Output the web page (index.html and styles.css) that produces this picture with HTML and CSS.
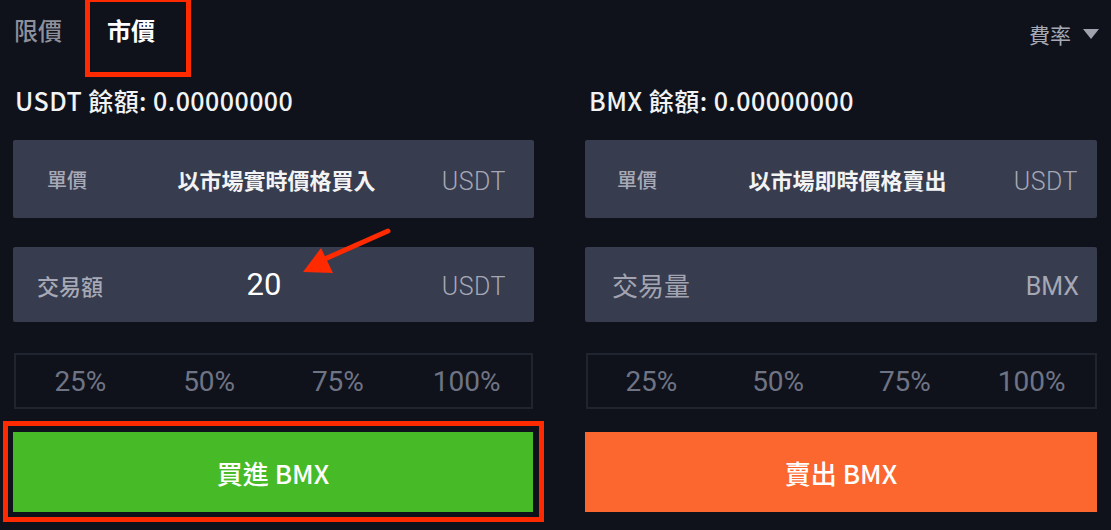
FILE: index.html
```html
<!DOCTYPE html>
<html lang="zh-Hant">
<head>
<meta charset="utf-8">
<title>市價交易</title>
<link rel="stylesheet" href="styles.css">
</head>
<body>
<div class="page">
  <header class="topbar">
    <nav class="tabs">
      <span class="tab">限價</span>
      <span class="tab tab-active">市價</span>
    </nav>
    <div class="fee">費率 <span class="caret"></span></div>
  </header>

  <main class="columns">
    <section class="col col-buy">
      <div class="balance">USDT 餘額: 0.00000000</div>
      <div class="field field-price">
        <span class="label">單價</span>
        <span class="value value-text">以市場實時價格買入</span>
        <span class="unit">USDT</span>
      </div>
      <div class="field field-amount">
        <span class="label label-md">交易額</span>
        <span class="value value-num">20</span>
        <span class="unit">USDT</span>
      </div>
      <div class="percents">
        <span>25%</span><span>50%</span><span>75%</span><span>100%</span>
      </div>
      <div class="btn-wrap highlighted">
        <button class="btn btn-buy">買進 BMX</button>
      </div>
    </section>

    <section class="col col-sell">
      <div class="balance">BMX 餘額: 0.00000000</div>
      <div class="field field-price">
        <span class="label">單價</span>
        <span class="value value-text">以市場即時價格賣出</span>
        <span class="unit">USDT</span>
      </div>
      <div class="field field-amount">
        <span class="label label-lg">交易量</span>
        <span class="value"></span>
        <span class="unit unit-strong">BMX</span>
      </div>
      <div class="percents">
        <span>25%</span><span>50%</span><span>75%</span><span>100%</span>
      </div>
      <div class="btn-wrap">
        <button class="btn btn-sell">賣出 BMX</button>
      </div>
    </section>
  </main>

  <svg class="arrow" width="1111" height="530" viewBox="0 0 1111 530" aria-hidden="true">
    <line x1="388" y1="231" x2="318" y2="262" stroke="#ff2a00" stroke-width="5" stroke-linecap="round"/>
    <polygon points="303,272 321,248 333,273" fill="#ff2a00"/>
  </svg>
</div>
</body>
</html>
```

FILE: styles.css
```css
* { box-sizing: border-box; margin: 0; padding: 0; }

html, body {
  background: #0f121b;
}

body {
  width: 1111px;
  height: 530px;
  overflow: hidden;
  font-family: "Noto Sans CJK TC", "Noto Sans", sans-serif;
  color: #eef0f3;
}

.page {
  position: relative;
  width: 1111px;
  height: 530px;
}

/* ---------- top bar ---------- */
.topbar {
  display: flex;
  align-items: flex-start;
  justify-content: space-between;
  height: 67px;
  padding: 0 12px 0 14px;
}

.tabs {
  display: flex;
  align-items: flex-start;
}

.tab {
  font-size: 24px;
  line-height: 32px;
  padding-top: 14px;
  color: #8d909b;
  font-weight: 500;
}

.tab-active {
  position: relative;
  color: #ffffff;
  margin-left: 45px;
  font-weight: 700;
}

/* annotation box around the active tab */
.tab-active::after {
  content: "";
  position: absolute;
  left: -22px;
  right: -36px;
  top: -3px;
  height: 70px;
  border: 5px solid #ff2a00;
}

.fee {
  display: flex;
  align-items: center;
  gap: 12px;
  padding-top: 20px;
  font-size: 21px;
  line-height: 28px;
  color: #a6a9b3;
}

.caret {
  width: 0;
  height: 0;
  border-left: 8px solid transparent;
  border-right: 8px solid transparent;
  border-top: 10px solid #a0a3ad;
}

/* ---------- columns ---------- */
.columns {
  display: grid;
  grid-template-columns: 521px 512px;
  column-gap: 51px;
  padding-left: 13px;
}

.col {
  display: flex;
  flex-direction: column;
}

.balance {
  margin-top: 18px;
  height: 30px;
  line-height: 30px;
  font-size: 25px;
  font-weight: 500;
  letter-spacing: 0.45px;
  color: #f2f3f5;
  padding-left: 2px;
}

.col-sell .balance { padding-left: 4px; }

.field {
  display: grid;
  grid-template-columns: 1fr auto 1fr;
  align-items: center;
  background: #373c4f;
  border-radius: 2px;
}

.field-price {
  margin-top: 25px;
  height: 78px;
}

.field-amount {
  margin-top: 29px;
  height: 75px;
}

.col-buy .field-price { padding: 0 28px 0 34px; }
.col-buy .field-amount { padding: 0 28px 0 24px; }
.col-sell .field-price { padding: 0 19px 0 32px; }
.col-sell .field-amount { padding: 0 18px 0 27px; }

.label {
  justify-self: start;
  font-size: 20px;
  font-weight: 500;
  color: #a7aab6;
}

.label-md { font-size: 22px; }
.label-lg { font-size: 26px; font-weight: 400; color: #a2a5b1; }

.value-text {
  font-size: 22px;
  font-weight: 700;
  color: #f3f3f3;
}

.value-num {
  font-family: Roboto, "Noto Sans", sans-serif;
  font-size: 31px;
  font-weight: 400;
  color: #ffffff;
  margin-right: 15px;
}

.unit {
  justify-self: end;
  font-family: Roboto, "Noto Sans", sans-serif;
  font-size: 25px;
  font-weight: 300;
  color: #a5a8b4;
  letter-spacing: 0.5px;
  margin-top: 4px;
}

.unit-strong {
  font-weight: 400;
  letter-spacing: 0;
}

.percents {
  margin-top: 31px;
  height: 56px;
  display: grid;
  grid-template-columns: repeat(4, 1fr);
  align-items: center;
  border: 2px solid #20242e;
  font-family: Roboto, "Noto Sans", sans-serif;
  font-size: 28px;
  color: #6f7485;
  text-align: center;
}

.col-buy .percents { margin-left: 1px; margin-right: 1px; }
.col-sell .percents { margin-left: 1px; }

.btn-wrap {
  position: relative;
  margin-top: 23px;
}

.highlighted::after {
  content: "";
  position: absolute;
  left: -10px;
  right: -10px;
  top: -11px;
  bottom: -10px;
  border: 5px solid #ff2a00;
  pointer-events: none;
}

.btn {
  display: block;
  width: 100%;
  height: 80px;
  border: none;
  font-family: "Noto Sans CJK TC", "Noto Sans", sans-serif;
  font-size: 26px;
  font-weight: 500;
  color: #ffffff;
}

.btn-buy { background: #47bb27; width: 520px; }
.btn-sell { background: #fb672f; }

.arrow {
  position: absolute;
  left: 0;
  top: 0;
  pointer-events: none;
}
```
